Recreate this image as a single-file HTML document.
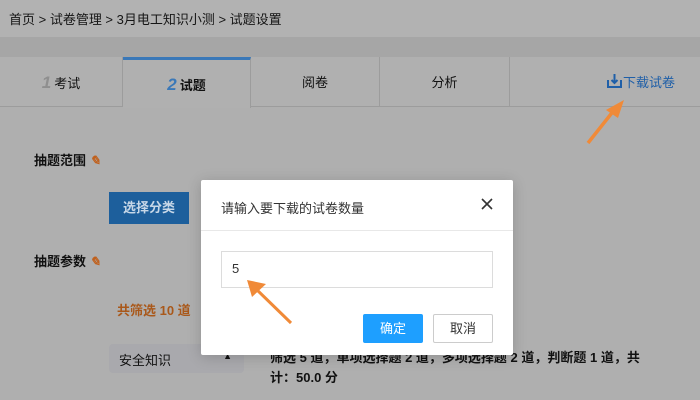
<!DOCTYPE html>
<html><head><meta charset="utf-8"><style>
*{margin:0;padding:0;box-sizing:border-box}
body{width:700px;height:400px;overflow:hidden;background:#afafaf;font-family:"Liberation Sans","Noto Sans CJK SC",sans-serif;position:relative;font-size:13px;color:#111}
.hdr{position:absolute;left:0;top:0;width:700px;height:37px;background:#b2b2b2;box-shadow:0 2px 4px rgba(0,0,0,.25)}
.crumb{position:absolute;left:9px;top:9px;font-size:13px;color:#151515}
.band{position:absolute;left:0;top:37px;width:700px;height:20px;background:#a6a6a6}
.tabs{position:absolute;left:0;top:57px;width:700px;height:50px;border-bottom:1px solid #9c9c9c;background:#b0b0b0}
.tab{position:absolute;top:0;height:50px;border-right:1px solid #9c9c9c;text-align:center;line-height:52px;font-size:13px}
.num{font-style:italic;font-weight:bold;font-size:17px;margin-right:3px}
.t{position:absolute;font-size:13px}
.b{font-weight:bold}
.dlg{position:absolute;left:201px;top:180px;width:312px;height:175px;background:#fff;border-radius:2px;box-shadow:0 2px 14px rgba(0,0,0,.18)}
</style></head><body>
<div class="hdr"><div class="crumb">首页 &gt; 试卷管理 &gt; 3月电工知识小测 &gt; 试题设置</div></div>
<div class="band"></div>
<div class="tabs">
<div class="tab" style="left:0;width:123px"><span class="num" style="color:#8f8f8f">1</span>考试</div>
<div class="tab" style="left:123px;width:128px;border-top:3px solid #3a78b8;line-height:50px;height:51px;background:#b0b0b0"><span class="num" style="color:#3a78b8">2</span><b>试题</b></div>
<div class="tab" style="left:251px;width:129px">阅卷</div>
<div class="tab" style="left:380px;width:130px">分析</div>
<div class="tab" style="left:510px;width:190px;border-right:none;color:#1f5fa8;text-align:right;padding-right:25px">
<svg width="17" height="16" viewBox="0 0 17 16" style="vertical-align:-2px"><path d="M2 7v7h13V7" fill="none" stroke="#1f5fa8" stroke-width="2"/><path d="M8.5 1v9M5.5 7l3 3 3-3" fill="none" stroke="#1f5fa8" stroke-width="2"/></svg>下载试卷</div>
</div>
<svg style="position:absolute;left:585px;top:97px" width="45" height="50"><path d="M3 46L30 12" stroke="#f08a38" stroke-width="3.5"/><path d="M39 3L21 13L33 21Z" fill="#f08a38"/></svg>
<div class="t b" style="left:34px;top:150px">抽题范围 <span style="color:#c0601c;font-style:italic">✎</span></div>
<div style="position:absolute;left:109px;top:192px;width:80px;height:32px;background:#1d5f9c;color:#c8d8e8;font-weight:bold;text-align:center;line-height:32px">选择分类</div>
<div class="t b" style="left:34px;top:251px">抽题参数 <span style="color:#c0601c;font-style:italic">✎</span></div>
<div class="t b" style="left:117px;top:300px;color:#a9581a">共筛选 10 道</div>
<div style="position:absolute;left:109px;top:344px;width:135px;height:29px;background:#a9a9ad;border-radius:4px;padding:6px 10px;font-size:13px">安全知识<span style="position:absolute;right:12px;top:7px;font-size:9px">▲</span></div>
<div class="t b" style="left:270px;top:347px">筛选 5 道，单项选择题 2 道，多项选择题 2 道，判断题 1 道，共</div>
<div class="t b" style="left:270px;top:367px">计：50.0 分</div>
<div class="dlg">
<div style="position:absolute;left:20px;top:18px;font-size:13px;color:#333">请输入要下载的试卷数量</div>
<svg style="position:absolute;right:20px;top:18px" width="12" height="12"><path d="M1 1L11 11M11 1L1 11" stroke="#333" stroke-width="1.6"/></svg>
<div style="position:absolute;left:0;top:50px;width:312px;height:1px;background:#e8e8e8"></div>
<div style="position:absolute;left:20px;top:71px;width:272px;height:37px;border:1px solid #dcdcdc;padding:9px 10px;font-size:13px;color:#333">5</div>
<div style="position:absolute;left:162px;top:134px;width:60px;height:29px;background:#1e9fff;color:#fff;text-align:center;line-height:29px;border-radius:2px">确定</div>
<div style="position:absolute;left:232px;top:134px;width:60px;height:29px;border:1px solid #ccc;color:#333;text-align:center;line-height:27px;border-radius:2px">取消</div>
</div>
<svg style="position:absolute;left:245px;top:280px" width="50" height="46"><path d="M46 43L10 8" stroke="#f08a38" stroke-width="3"/><path d="M2 0L21 4L7 17Z" fill="#f08a38"/></svg>
</body></html>
